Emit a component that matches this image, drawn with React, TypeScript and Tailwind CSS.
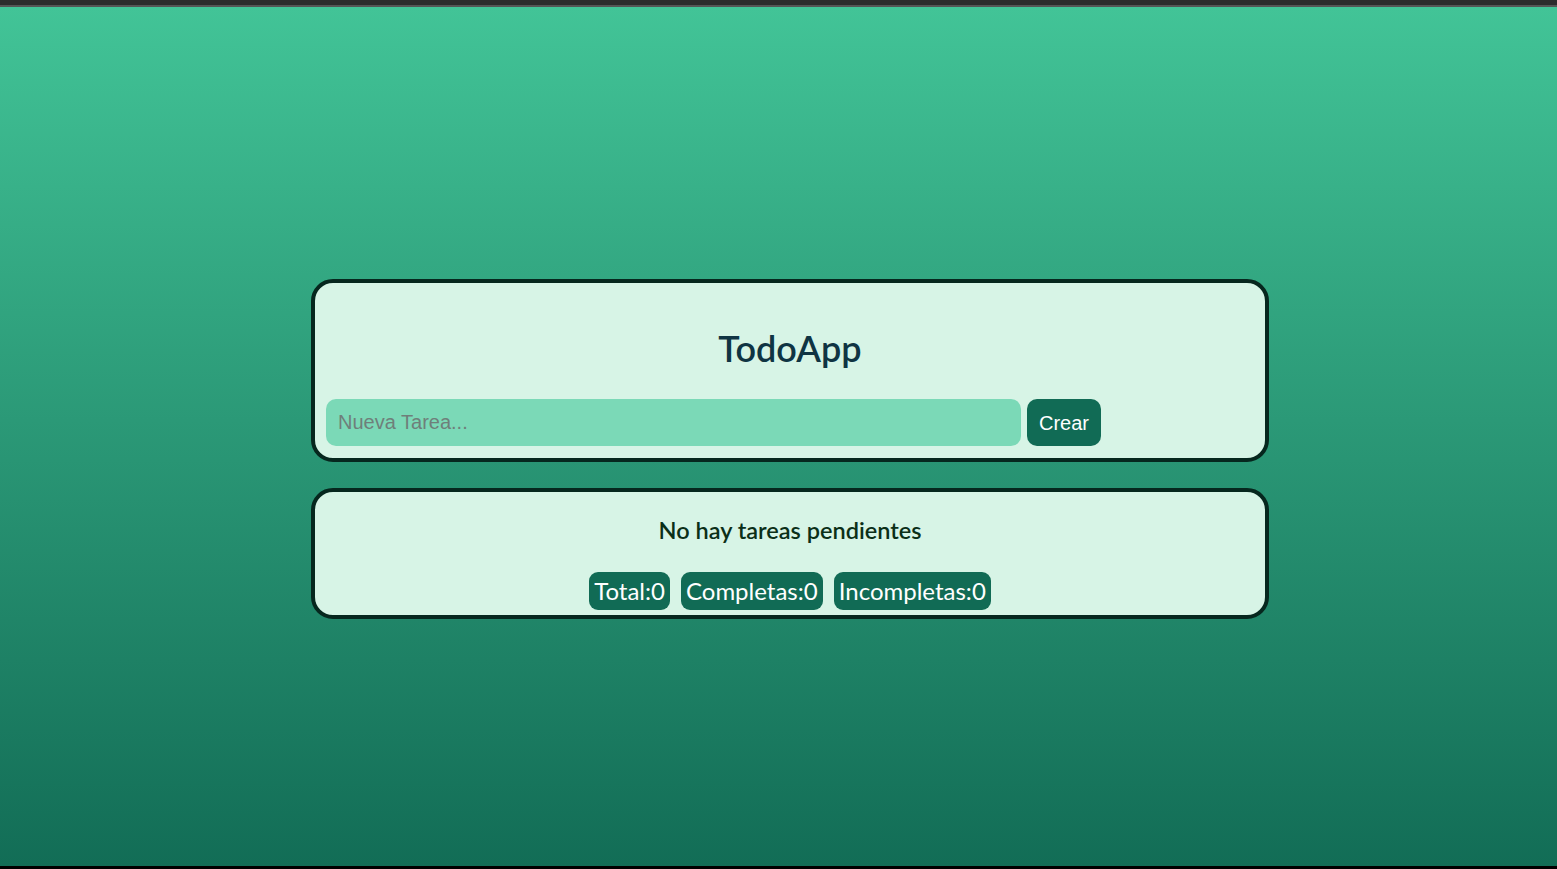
export default function App () {
    const stats = [
        { label: "Total", value: 0 },
        { label: "Completas", value: 0 },
        { label: "Incompletas", value: 0 },
    ]

    return (
        <div className="h-[869px] flex flex-col bg-black">
            {/* window chrome */}
            <div className="h-[5px] bg-[#2c2c2c]" />
            <div className="h-[2px] bg-[#555555]" />

            <main className="flex-1 flex flex-col items-center pt-[272px] pl-[23px] bg-gradient-to-b from-[#42c497] to-[#126d56] font-['Lato',sans-serif]">
                {/* Header card */}
                <section className="w-[958px] bg-[#d7f4e6] border-4 border-[#06271e] rounded-[22px] pt-[45px] pb-[12px] px-[11px]">
                    <h1 className="text-center text-[36px] leading-[40px] font-semibold text-[#0f3443] mb-[31px]">
                        TodoApp
                    </h1>
                    <div className="flex gap-[6px] font-['Liberation_Sans',Arial,sans-serif]">
                        <input
                            type="text"
                            placeholder="Nueva Tarea..."
                            className="w-[695px] h-[47px] rounded-[10px] bg-[#7bd9b7] px-[12px] text-[20px] text-[#1b3b30] placeholder:text-[#6f7f7a] outline-none"
                        />
                        <button className="h-[47px] px-[12px] rounded-[10px] bg-[#116b55] text-white text-[20px]">
                            Crear
                        </button>
                    </div>
                </section>

                {/* Tasks card */}
                <section className="w-[958px] mt-[26px] bg-[#d7f4e6] border-4 border-[#06271e] rounded-[22px] pt-[24px] pb-[5px] flex flex-col items-center">
                    <p className="text-[23.5px] leading-[29px] font-semibold text-[#0b2f18]">
                        No hay tareas pendientes
                    </p>
                    <div className="flex gap-[11px] mt-[27px]">
                        {stats.map(s => (
                            <span
                                key={s.label}
                                className="h-[38px] flex items-center px-[5px] rounded-[9px] bg-[#116b55] text-white text-[24px]"
                            >
                                {s.label}:{s.value}
                            </span>
                        ))}
                    </div>
                </section>
            </main>

            <div className="h-[3px] bg-black" />
        </div>
    )
}
